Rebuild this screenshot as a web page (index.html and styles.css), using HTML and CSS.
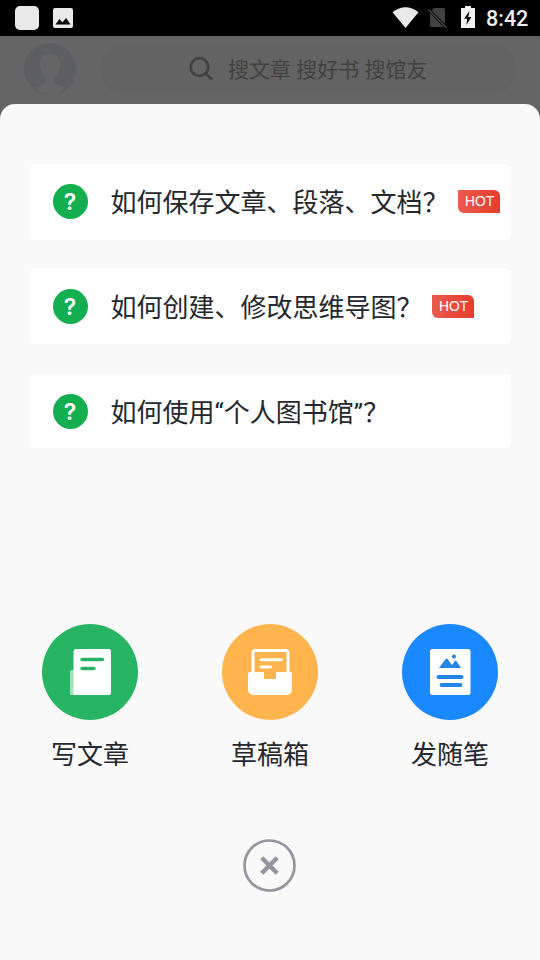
FILE: index.html
```html
<!DOCTYPE html>
<html lang="zh-CN">
<head>
<meta charset="utf-8">
<title>个人图书馆</title>
<link rel="stylesheet" href="styles.css">
</head>
<body>
<div class="screen">
  <div class="status">
    <svg width="90" height="36" viewBox="0 0 90 36">
      <rect x="15" y="6" width="24" height="24" rx="5" fill="#e9e9e9"/>
      <rect x="53" y="8" width="20" height="20" rx="2" fill="#e9e9e9"/>
      <path d="M55.500 24.500L59.500 19l3 3.500L66 18l4.500 6.500z" fill="#000"/>
    </svg>
    <div class="status-right">
      <svg width="90" height="36" viewBox="388 0 90 36">
        <path d="M392.500 12.200Q405.500 2.500 418.500 12.200L405.500 28z" fill="#e9e9e9"/>
        <path d="M434 8h9.500a1.500 1.500 0 0 1 1.500 1.500V24L431.500 10.500z M430 13v12.500a1.500 1.500 0 0 0 1.500 1.500h12z" fill="#414141"/>
        <path d="M428.300 9.500L446.500 27.700" stroke="#484848" stroke-width="1.500"/>
        <path d="M461 8h4V6h6v2h4v20h-14z" fill="#f0f0f0"/>
        <path d="M469.500 11L464 18.700h3.200l-.8 6.300 5-8h-3.100z" fill="#000"/>
      </svg>
      <span class="clock">8:42</span>
    </div>
  </div>
  <div class="header">
    <svg class="avatar" width="52" height="52" viewBox="0 0 52 52">
      <circle cx="26" cy="26" r="26" fill="#5c5e61"/>
      <path d="M26 11c-6.500 0-10 4.500-10 10.500 0 5.500 2 9.500 5.500 13.500 0 6-2.500 7.500-10 10C16 50 21 52 26 52s10-2 14.500-7c-7.500-2.500-10-4-10-10 3.500-4 5.500-8 5.500-13.500C36 15.500 32.500 11 26 11z" fill="#656565"/>
    </svg>
    <div class="search">
      <svg width="26" height="26" viewBox="0 0 26 26" fill="none" stroke="#414141" stroke-width="2.700">
        <circle cx="11.500" cy="11" r="8.800"/><path d="M17.500 17.500l6.500 6"/>
      </svg>
      <span class="search-text">搜文章 搜好书 搜馆友</span>
    </div>
  </div>
  <main class="sheet">
    <div class="questions">
      <div class="card"><span class="help">?</span><span class="question">如何保存文章、段落、文档？</span><span class="hot">HOT</span></div>
      <div class="card card-middle"><span class="help">?</span><span class="question">如何创建、修改思维导图？</span><span class="hot">HOT</span></div>
      <div class="card card-last"><span class="help">?</span><span class="question">如何使用“个人图书馆”？</span></div>
    </div>
    <div class="actions">
      <div class="action">
        <svg width="96" height="96" viewBox="0 0 96 96">
          <circle cx="48" cy="48" r="48" fill="#27b564"/>
          <path d="M32 46h-2a2 2 0 0 0-2 2v23h8V46z" fill="#a5dfbd"/>
          <path d="M34 25h32.500a2.500 2.500 0 0 1 2.500 2.500v41a2.500 2.500 0 0 1-2.500 2.500H31.500V27.500A2.500 2.500 0 0 1 34 25z" fill="#fff"/>
          <path d="M40 35.500h20.500M40 44.500h12" stroke="#27b564" stroke-width="3.500" stroke-linecap="round"/>
        </svg>
        <span>写文章</span>
      </div>
      <div class="action">
        <svg width="96" height="96" viewBox="0 0 96 96">
          <circle cx="48" cy="48" r="48" fill="#ffb44d"/>
          <path d="M31 51V29q0-2.500 2.500-2.500h30Q66 26.500 66 29v22M39 35.800h20.500M39 42.900h9.500" fill="none" stroke="#fff" stroke-width="3" stroke-linecap="round"/>
          <path d="M28 48h14v7h12v-7h16v17.500a5.500 5.500 0 0 1-5.500 5.500h-33a5.500 5.500 0 0 1-5.500-5.500V50q0-2 2-2z" fill="#fff"/>
        </svg>
        <span>草稿箱</span>
      </div>
      <div class="action">
        <svg width="96" height="96" viewBox="0 0 96 96">
          <circle cx="48" cy="48" r="48" fill="#1a88ff"/>
          <rect x="28" y="25" width="40.500" height="46" rx="2.500" fill="#fff"/>
          <path d="M37 44l6.500-9q1-1.200 2 0l4.500 6 2.700-3.800q1-1 1.800 0L59 44z" fill="#2385e4"/>
          <circle cx="52" cy="32.500" r="2" fill="#2385e4"/>
          <path d="M36.500 53h23M39.500 61h19" stroke="#2385e4" stroke-width="3.800" stroke-linecap="round"/>
        </svg>
        <span>发随笔</span>
      </div>
    </div>
    <svg class="close" width="53" height="53" viewBox="0 0 53 53" fill="none" stroke="#94959f">
      <circle cx="26.500" cy="26.500" r="25" stroke-width="2.700"/>
      <path d="M18.700 18.700l15.500 15.500M34.200 18.700l-15.500 15.500" stroke-width="4.400"/>
    </svg>
  </main>
</div>
</body>
</html>
```
FILE: styles.css
```css
* { box-sizing: border-box; }
body { margin: 0; font-family: Roboto, "Noto Sans CJK SC", sans-serif; color: #24272e; }
svg { display: block; flex: none; }
.screen { width: 540px; height: 960px; overflow: hidden; display: flex; flex-direction: column; background: #656565; }
.status { height: 36px; flex: none; display: flex; justify-content: space-between; background: #000; }
.status-right { display: flex; width: 152px; }
.clock { margin-left: 8px; line-height: 38px; font-size: 21.5px; font-weight: 500; color: #eee; white-space: nowrap; }
.header { height: 68px; flex: none; display: flex; align-items: center; gap: 24px; padding: 0 24px 2px; }
.search { width: 416px; height: 52px; border-radius: 26px; background: #636363; display: flex; align-items: center; gap: 14px; padding-left: 88px; font-size: 21px; color: #414141; white-space: nowrap; }
.search-text { padding-bottom: 2px; }
.sheet { flex: 1; display: flex; flex-direction: column; align-items: center; padding-top: 60px; border-radius: 15px 15px 0 0; background: #f9f9f9; }
.questions { width: 481px; display: flex; flex-direction: column; gap: 28px; }
.card { height: 76px; display: flex; align-items: center; padding: 0 0 1px 23px; border-radius: 6px; background: #fff; font-size: 26px; line-height: 36px; white-space: nowrap; }
.card-middle { padding-top: 1px; padding-bottom: 0; }
.card-last { height: 74px; margin-top: 2px; padding-bottom: 0; }
.question { padding-top: 3px; }
.help { width: 35px; height: 35px; margin-right: 23px; border-radius: 50%; background: #13ae50; color: #fff; font-family: Inter, sans-serif; font-size: 23px; font-weight: 600; line-height: 36px; text-align: center; }
.hot { width: 42px; height: 23px; margin-left: 9px; padding-left: 2px; border-radius: 0 6px 0 6px; background: linear-gradient(90deg, #ea5b4e, #e83c2c); color: #fff; font-family: "Liberation Sans", sans-serif; font-size: 13.8px; line-height: 23px; text-align: center; }
.actions { width: 456px; display: flex; justify-content: space-between; margin-top: 176px; }
.action { display: flex; flex-direction: column; align-items: center; gap: 17px; font-size: 26px; line-height: 36px; }
.close { margin: 66px 1px 0 0; }
```
